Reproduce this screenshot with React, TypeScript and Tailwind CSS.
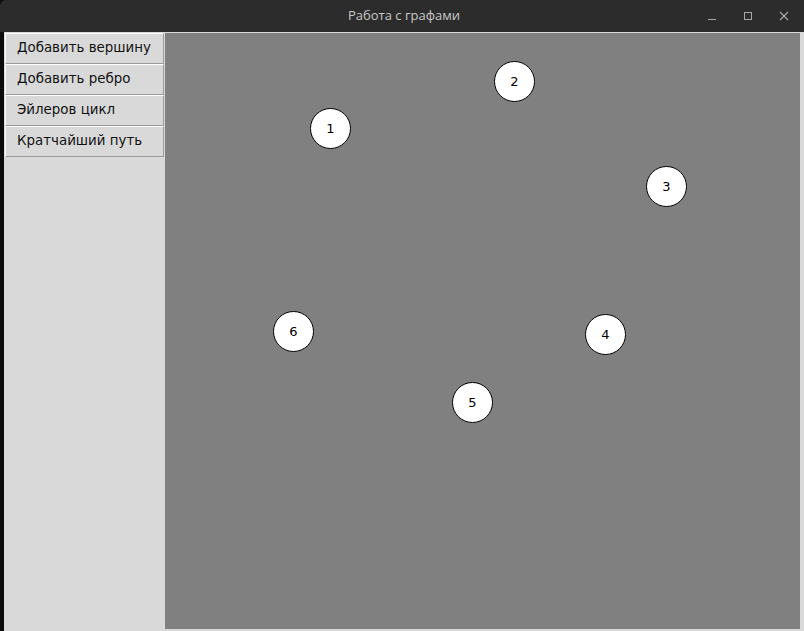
const nodes = [
  { id: 1, x: 165, y: 95 },
  { id: 2, x: 349, y: 48 },
  { id: 3, x: 501, y: 153 },
  { id: 4, x: 440, y: 301 },
  { id: 5, x: 307, y: 369 },
  { id: 6, x: 128, y: 298 },
];

const actions = ['Добавить вершину', 'Добавить ребро', 'Эйлеров цикл', 'Кратчайший путь'];

function TitleBar() {
  return (
    <div className="h-8 flex items-center justify-center relative bg-[#2c2c2c] rounded-tl-[6px]">
      <span className="text-[13px] text-[#c8c8c8] ml-1" style={{ fontFamily: '"Open Sans", "Noto Sans", sans-serif' }}>
        Работа с графами
      </span>
      {/* Window controls */}
      <div className="absolute right-0 top-0 h-8 flex items-center">
        <div className="w-9 h-8 flex items-center justify-center">
          <svg width="10" height="10" viewBox="0 0 10 10">
            <line x1="1" y1="8.5" x2="9" y2="8.5" stroke="#a8a8a8" strokeWidth="1" />
          </svg>
        </div>
        <div className="w-9 h-8 flex items-center justify-center">
          <svg width="10" height="10" viewBox="0 0 10 10">
            <rect x="1.5" y="1.5" width="7" height="7" fill="none" stroke="#a8a8a8" strokeWidth="1" />
          </svg>
        </div>
        <div className="w-9 h-8 flex items-center justify-center mr-[2px]">
          <svg width="10" height="10" viewBox="0 0 10 10">
            <path d="M1 1 L9 9 M9 1 L1 9" stroke="#a8a8a8" strokeWidth="1.2" />
          </svg>
        </div>
      </div>
    </div>
  );
}

export default function App() {
  return (
    <div className="w-[804px] h-[631px] flex flex-col bg-[#0b0c0e] overflow-hidden">
      <TitleBar />
      <div className="flex-1 flex">
        {/* Left window border */}
        <div className="w-1 bg-[#0b0c0e]" />
        <div className="flex-1 flex bg-[#d9d9d9] pt-px">
          {/* Button panel */}
          <div className="w-[161px] flex flex-col px-px" style={{ fontFamily: '"DejaVu Sans", sans-serif' }}>
            {actions.map((a) => (
              <button
                key={a}
                className="h-[31px] text-left pl-[11px] text-[13.4px] text-[#111] bg-[#d9d9d9] border border-t-white border-l-white border-r-[#9a9a9a] border-b-[#9a9a9a]"
              >
                {a}
              </button>
            ))}
          </div>
          {/* Canvas */}
          <div className="w-[635px] h-[596px] relative bg-[#808080]">
            {nodes.map((n) => (
              <div
                key={n.id}
                className="absolute w-[41px] h-[41px] -ml-5 -mt-5 rounded-full bg-white border border-black flex items-center justify-center text-[13px] text-black"
                style={{ left: n.x, top: n.y, fontFamily: '"DejaVu Sans", sans-serif' }}
              >
                {n.id}
              </div>
            ))}
          </div>
        </div>
      </div>
    </div>
  );
}
